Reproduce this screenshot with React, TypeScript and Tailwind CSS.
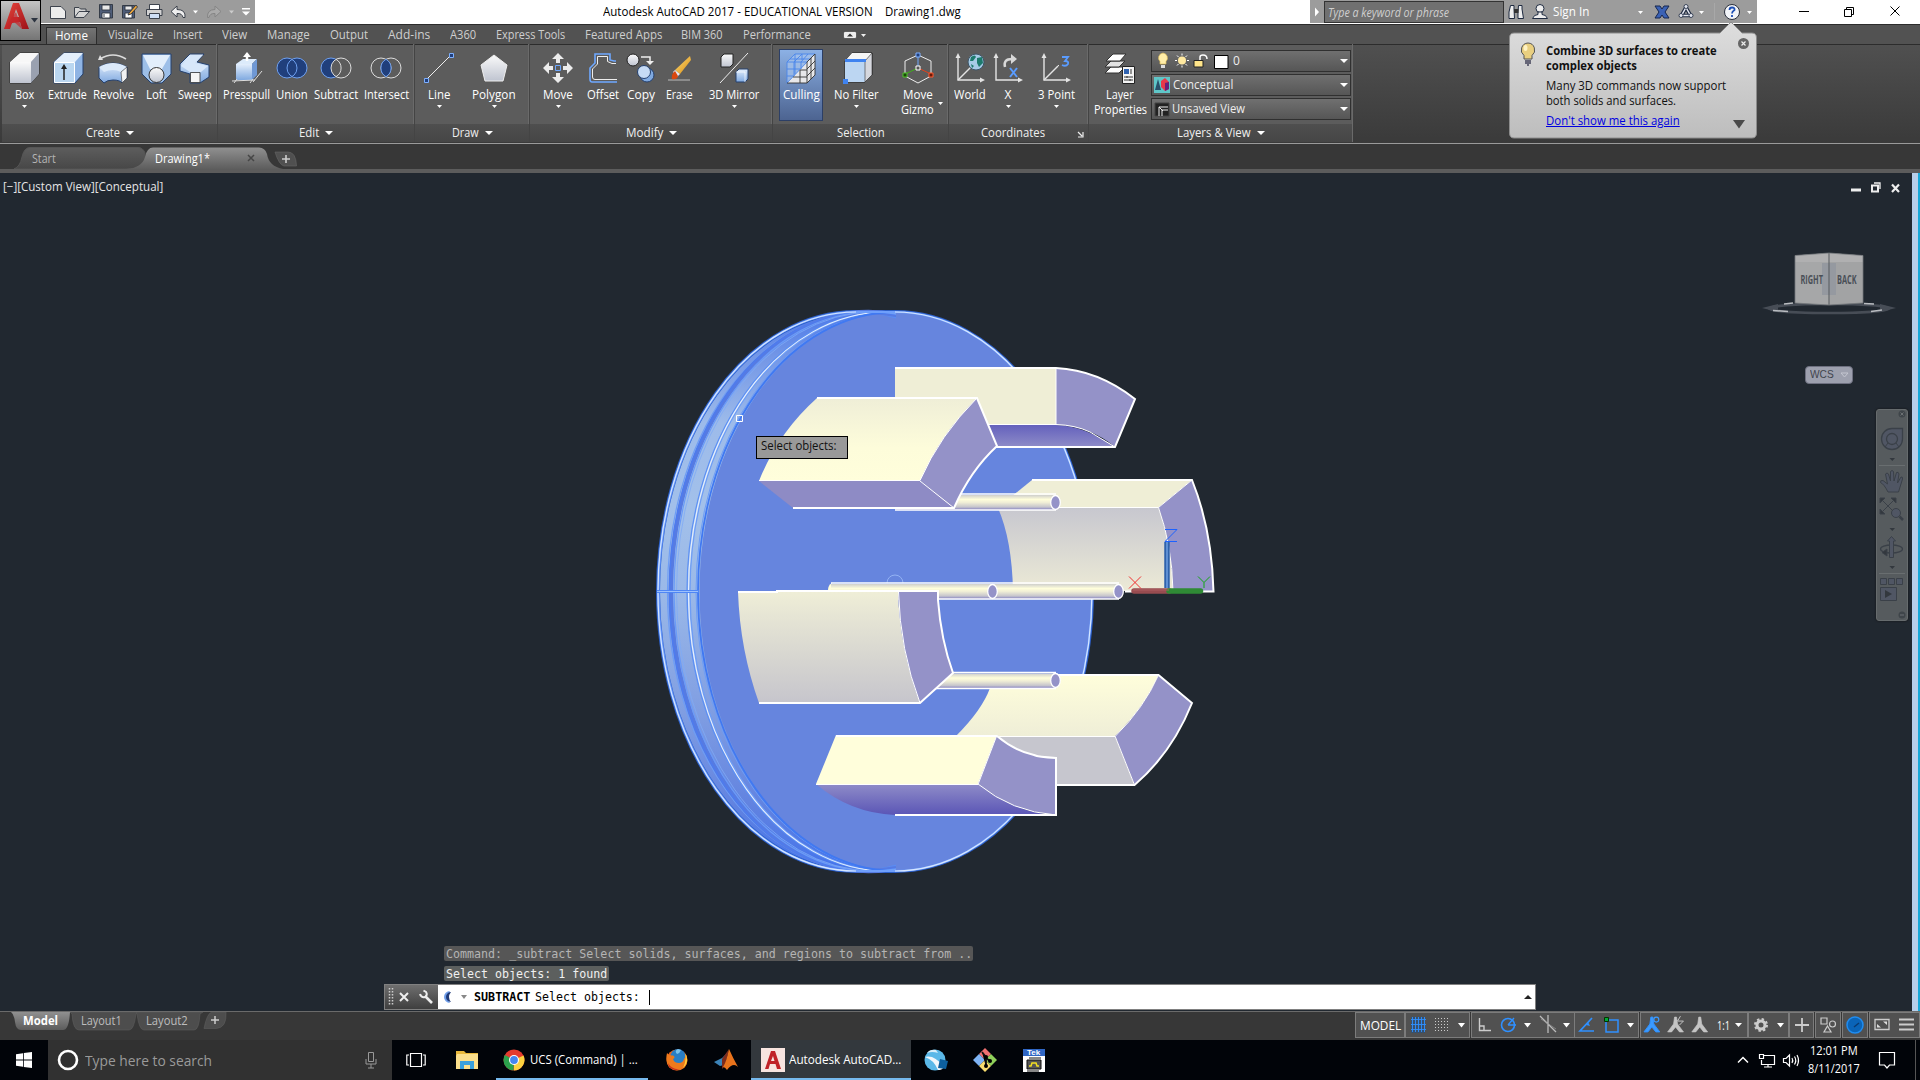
import React, { useLayoutEffect, useRef, useState } from "react";

/* Text condensed or stretched to a given advance width. */
function Fit({ w, className = "", children }: { w: number; className?: string; children: React.ReactNode }) {
  const ref = useRef<HTMLSpanElement>(null);
  const [s, setS] = useState(1);
  useLayoutEffect(() => {
    if (ref.current && ref.current.offsetWidth) setS(w / ref.current.offsetWidth);
  }, [w, children]);
  return (
    <span className={"inline-block whitespace-nowrap shrink-0 " + className} style={{ width: w }}>
      <span ref={ref} className="inline-block origin-left" style={{ transform: `scaleX(${s})` }}>
        {children}
      </span>
    </span>
  );
}

const Down = ({ c = "#fff", w = 6, h = 3 }: { c?: string; w?: number; h?: number }) => (
  <svg width={w} height={h} viewBox="0 0 10 5" preserveAspectRatio="none" className="block shrink-0">
    <path d="M0 0H10L5 5Z" fill={c} />
  </svg>
);

const Cell = ({ className = "", children }: { className?: string; children?: React.ReactNode }) => (
  <div className={"flex shrink-0 items-center justify-center " + className}>{children}</div>
);

/* ------------------------------------------------------------ ribbon icons */
const Svg = ({ children, size = 32 }: { children: React.ReactNode; size?: number }) => (
  <svg width={size} height={size} viewBox="0 0 32 32" fill="none" className="block shrink-0 overflow-visible">
    {children}
  </svg>
);

const Defs = () => (
  <svg width="0" height="0" className="absolute">
    <defs>
      <linearGradient id="gGray" x1="0" y1="0" x2="0" y2="1"><stop offset="0" stopColor="#fafafa" /><stop offset="1" stopColor="#bfc4d0" /></linearGradient>
      <linearGradient id="gBlue" x1="0" y1="0" x2="0" y2="1"><stop offset="0" stopColor="#e4effc" /><stop offset="1" stopColor="#7fa9e0" /></linearGradient>
      <linearGradient id="gRed" x1="0" y1="0" x2="1" y2="1"><stop offset="0" stopColor="#e8453c" /><stop offset="1" stopColor="#9c1218" /></linearGradient>
      <linearGradient id="gGold" x1="0" y1="0" x2="1" y2="1"><stop offset="0" stopColor="#ffe27a" /><stop offset="1" stopColor="#d98910" /></linearGradient>
    </defs>
  </svg>
);

const IBox = () => (
  <Svg>
    <path d="M2 10L12 1H31V22L23 31H2Z" fill="#dcdfe6" stroke="#2a2a2a" />
    <path d="M2 10L12 1H31L23 10Z" fill="#f7f7f7" /><path d="M2 10H23V31H2Z" fill="url(#gGray)" /><path d="M23 10L31 1V22L23 31Z" fill="#9aa1b0" />
  </Svg>
);
const IExtrude = () => (
  <Svg>
    <path d="M2 10L12 1H31V22L23 31H2Z" fill="#8fb4e4" stroke="#24406e" />
    <path d="M2 10L12 1H31L23 10Z" fill="#e4effb" /><path d="M2.500 10.500H22.500V30.500H2.500Z" fill="#bad6f0" stroke="#fff" />
    <path d="M12 28V15" stroke="#222" strokeWidth="1.500" /><path d="M9 17L12 12L15 17Z" fill="#222" />
  </Svg>
);
const IRevolve = () => (
  <Svg>
    <path d="M3 7Q16-1 29 7" stroke="#ddd" strokeWidth="1.500" /><path d="M1 8L3 3L6 8Z" fill="#ddd" />
    <path d="M2 15Q16 7 30 15V26L25 31Q23 28 16 28Q10 28 7 31L2 26Z" fill="url(#gBlue)" stroke="#24406e" />
    <path d="M2 15Q16 7 30 15L24 20Q16 16 7 20Z" fill="#dceafa" /><path d="M24 20L30 15V26L25 31Z" fill="#f2f2f2" stroke="#333" strokeWidth=".6" />
  </Svg>
);
const ILoft = () => (
  <Svg>
    <path d="M2 2H31V22L22 31H11L2 22Z" fill="#9dbfe8" stroke="#24406e" /><path d="M3 3H30L22 17H10Z" fill="#e2eefb" />
    <circle cx="16.500" cy="23" r="7.500" fill="url(#gGray)" stroke="#333" />
  </Svg>
);
const ISweep = () => (
  <Svg>
    <path d="M11 2H25L18 10L30 13V25L21 31H11V22L1 19V12Z" fill="url(#gBlue)" stroke="#24406e" />
    <path d="M11 3H24L16 11L29 14L22 20L11 20L2 14Z" fill="#d7e7fa" /><path d="M11.500 20.500H21V30.500H11.500Z" fill="#f5f5f5" stroke="#333" strokeWidth=".8" />
  </Svg>
);
const IPress = () => (
  <Svg>
    <path d="M6 12L13 7H27L22 12Z" fill="#dcebfb" /><path d="M6 12H22V28H6Z" fill="url(#gBlue)" /><path d="M22 12L27 7V23L22 28Z" fill="#6f98d4" />
    <path d="M2 29L25 28M23 30L32 19M4 31L7 27M20 31L23 27" stroke="#ddd" /><path d="M17 9V4" stroke="#fff" strokeWidth="2.500" /><path d="M13 5L17 0L21 5Z" fill="#fff" />
  </Svg>
);
const IUnion = () => (
  <Svg>
    <circle cx="11" cy="16" r="10" fill="#203f7c" /><circle cx="21" cy="16" r="10" fill="#203f7c" /><circle cx="11" cy="16" r="10" stroke="#6ea0f0" /><circle cx="21" cy="16" r="10" stroke="#6ea0f0" />
  </Svg>
);
const ISubtract = () => (
  <Svg>
    <circle cx="11" cy="16" r="10" fill="#203f7c" stroke="#6ea0f0" /><circle cx="21" cy="16" r="10" fill="#5c5c5c" stroke="#ddd" /><path d="M16 7.300A10 10 0 0 1 16 24.700" stroke="#ddd" />
  </Svg>
);
const IIntersect = () => (
  <Svg>
    <circle cx="11" cy="16" r="10" stroke="#ddd" /><circle cx="21" cy="16" r="10" stroke="#ddd" /><path d="M16 7.300A10 10 0 0 1 16 24.700A10 10 0 0 1 16 7.300Z" fill="#203f7c" stroke="#6ea0f0" />
  </Svg>
);
const ILine = () => (
  <Svg>
    <path d="M4 27L27 4" stroke="#eee" /><path d="M1.500 26.500h4v4h-4zM26.500 1.500h4v4h-4z" fill="#203f7c" stroke="#7fb0ff" />
  </Svg>
);
const IPolygon = () => (
  <Svg><path d="M16 3L29 13L25 29H7L3 13Z" fill="url(#gGray)" stroke="#eee" /></Svg>
);
const IMove = () => (
  <Svg>
    <path d="M16 1L22 7H18V11H14V7H10ZM16 31L22 25H18V21H14V25H10ZM1 16L7 10V14H11V18H7V22ZM31 16L25 10V14H21V18H25V22Z" fill="#ececec" />
    <path d="M13.500 13.500h5v5h-5z" stroke="#6ea8ff" />
  </Svg>
);
const IOffset = () => (
  <Svg>
    <path d="M30 30H5Q3 30 3 27V16L8 11V2H23V8L27 9H29" stroke="#6ea8ff" strokeWidth="1.600" /><path d="M30 27.500H8Q5.500 27.500 5.500 25V17L10.500 12V4.500H20.500V9.500L25 11.500H29" stroke="#eee" />
  </Svg>
);
const ICopy = () => (
  <Svg>
    <circle cx="8" cy="8" r="6" fill="url(#gGray)" stroke="#222" /><path d="M16 5H25V10" stroke="#eee" strokeWidth="1.500" /><path d="M21 9H29L25 13Z" fill="#eee" />
    <circle cx="22" cy="23" r="7" fill="#7fa9e0" stroke="#24406e" /><circle cx="19" cy="20" r="6.500" fill="#c6dbf5" stroke="#24406e" />
  </Svg>
);
const IErase = () => (
  <Svg>
    <path d="M5 28H27" stroke="#bbb" /><path d="M27 4L28 8L17 22L12 18Z" fill="url(#gGold)" /><path d="M12 18L17 22L14 25L10 20Z" fill="#e8e8f0" /><path d="M12 19Q8 22 9 27Q14 28 15 24Z" fill="#d9480f" />
  </Svg>
);
const IMirror = () => (
  <Svg>
    <path d="M2 31L30 1" stroke="#eee" /><path d="M3 5L6 2H15V12L12 15H3Z" fill="url(#gGray)" stroke="#222" /><path d="M18 20L21 17H30V27L27 30H18Z" fill="url(#gBlue)" stroke="#24406e" /><path d="M18 20H27V30" stroke="#fff" strokeWidth=".7" />
  </Svg>
);
const ICulling = () => (
  <Svg>
    <path d="M2 31V10L10 2H30V23L22 31Z" fill="#a9c6ee" opacity=".7" /><path d="M2 31L22 10V31Z" fill="#e8e8ea" /><path d="M22 10L30 2V23L22 31Z" fill="#e8e8ea" />
    <path d="M2 10H22M10 2H30M2 10V31M2 10L10 2M9 10V24M9 10L17 2M16 10V17M16 10L23 2M2 17H15M2 24H8M2 31L22 10M10 2V22M5 7H26M17 2V8" stroke="#4a86ea" strokeWidth=".9" />
    <path d="M22 10L30 2V23L22 31V10M22 17L30 9M22 24L30 16M26 6V27M2 31H22M8 25H22M15 18H22M15 18V31" stroke="#333" strokeWidth=".9" />
  </Svg>
);
const INoFilter = () => (
  <Svg>
    <path d="M4 9L11 1H31V23L24 30H4Z" fill="#dedfe2" stroke="#222" /><path d="M4 9L11 1H31L24 9Z" fill="#f5f5f5" /><path d="M4 9H24V30H4Z" fill="#bcd6f2" /><path d="M24 9L31 1V23L24 30Z" fill="#d6d8de" stroke="#333" strokeWidth=".6" />
    <path d="M4 7H25V10H4ZM2 27H7V32H2Z" fill="#3f83f0" />
  </Svg>
);
const IGizmo = () => (
  <Svg>
    <path d="M16 3L29 9V24L16 31L3 24V9Z" stroke="#eee" /><path d="M16 16V3" stroke="#6ea8ff" /><path d="M16 16L3 22" stroke="#3fae1a" /><path d="M16 16L29 22" stroke="#e0401a" />
    <path d="M14 1h4v4h-4z" fill="#203f7c" stroke="#7fb0ff" /><path d="M1 21h4v4h-4z" fill="#1a4a08" stroke="#4fc22a" /><path d="M27 21h4v4h-4z" fill="#6a1a08" stroke="#ff5a30" /><path d="M14 14h4v4h-4z" fill="#555" stroke="#fff" />
  </Svg>
);
const Axes = ({ diag = true }: { diag?: boolean }) => (
  <>
    <path d="M4 4V28H28" stroke="#e4e4e4" strokeWidth="1.400" /><path d="M1.500 6L4 1L6.500 6ZM26 25.500L31 28L26 30.500Z" fill="#e4e4e4" />
    {diag && <path d="M4 28L18 14" stroke="#e4e4e4" strokeWidth="1.400" />}
  </>
);
const IWorld = () => (
  <Svg>
    <Axes /><circle cx="22" cy="10" r="8" fill="#a7cbe6" stroke="#3c5568" /><path d="M17 5Q21 2 22 5L19 9L16 9ZM23 6L28 5L29 11L25 15L23 11ZM17 12L20 14L18 16Z" fill="#1d7a6c" />
  </Svg>
);
const IX = () => (
  <Svg>
    <Axes diag={false} /><path d="M13 15Q11 7 20 7" stroke="#d8d8d8" strokeWidth="2.500" /><path d="M19 2L25 7L19 12Z" fill="#d8d8d8" /><path d="M18 16L25 25M25 16L18 25" stroke="#5a9cff" strokeWidth="2" />
  </Svg>
);
const I3P = () => (
  <Svg>
    <Axes /><path d="M15 17L19 13" stroke="#e4e4e4" /><path d="M22 5H28L25 9Q29 9 28 12Q26 15 22 13" stroke="#5a9cff" strokeWidth="1.800" />
  </Svg>
);
const ILayers = () => (
  <Svg>
    <path d="M7 15H21L15 21H1Z" fill="#fff" stroke="#333" /><path d="M7 9H21L15 15H1Z" fill="#e4e4e4" stroke="#333" /><path d="M9 2H22L16 9H2Z" fill="#fff" stroke="#333" />
    <path d="M18.500 14.500H30.500V31.500H18.500Z" fill="#f4f4f4" stroke="#222" /><path d="M20 17H25V22H20Z" fill="#2f62b0" /><path d="M27 17V22M20 25H29M20 28H29M23 24V26M26 27V29" stroke="#333" />
  </Svg>
);

type Btn = { cell: string; label: string; w: number; icon: React.ReactNode; arrow?: boolean; second?: string; w2?: number; side?: boolean; on?: boolean };
type PanelT = { width: string; title: string; tw: number; menu?: boolean; launcher?: boolean; pl?: string; items: Btn[] };

const panels: PanelT[] = [
  { width: "w-[216px]", title: "Create", tw: 34, menu: true, items: [
    { cell: "w-[44px]", label: "Box", w: 19, icon: <IBox />, arrow: true }, { cell: "w-[43px]", label: "Extrude", w: 39, icon: <IExtrude /> },
    { cell: "w-[48px]", label: "Revolve", w: 41, icon: <IRevolve /> }, { cell: "w-[38px]", label: "Loft", w: 21, icon: <ILoft /> }, { cell: "w-[40px]", label: "Sweep", w: 34, icon: <ISweep /> }] },
  { width: "w-[197px]", title: "Edit", tw: 20, menu: true, pl: "pl-[2px]", items: [
    { cell: "w-[52px]", label: "Presspull", w: 47, icon: <IPress /> }, { cell: "w-[39px]", label: "Union", w: 32, icon: <IUnion /> },
    { cell: "w-[49px]", label: "Subtract", w: 44, icon: <ISubtract /> }, { cell: "w-[52px]", label: "Intersect", w: 45, icon: <IIntersect /> }] },
  { width: "w-[115px]", title: "Draw", tw: 27, menu: true, items: [
    { cell: "w-[48px]", label: "Line", w: 22, icon: <ILine />, arrow: true }, { cell: "w-[62px]", label: "Polygon", w: 44, icon: <IPolygon />, arrow: true }] },
  { width: "w-[243px]", title: "Modify", tw: 37, menu: true, items: [
    { cell: "w-[56px]", label: "Move", w: 30, icon: <IMove />, arrow: true }, { cell: "w-[34px]", label: "Offset", w: 32, icon: <IOffset /> },
    { cell: "w-[42px]", label: "Copy", w: 28, icon: <ICopy /> }, { cell: "w-[34px]", label: "Erase", w: 27, icon: <IErase /> }, { cell: "w-[76px]", label: "3D Mirror", w: 50, icon: <IMirror />, arrow: true }] },
  { width: "w-[176px]", title: "Selection", tw: 48, pl: "pl-[6px]", items: [
    { cell: "w-[44px]", label: "Culling", w: 37, icon: <ICulling />, on: true }, { cell: "w-[67px]", label: "No Filter", w: 45, icon: <INoFilter />, arrow: true },
    { cell: "w-[55px]", label: "Move", w: 30, second: "Gizmo", w2: 33, side: true, icon: <IGizmo /> }] },
  { width: "w-[140px]", title: "Coordinates", tw: 64, launcher: true, items: [
    { cell: "w-[42px]", label: "World", w: 32, icon: <IWorld /> }, { cell: "w-[34px]", label: "X", w: 7, icon: <IX />, arrow: true }, { cell: "w-[62px]", label: "3 Point", w: 37, icon: <I3P />, arrow: true }] },
];

const PanelTitle = ({ p }: { p: { title: string; tw: number; menu?: boolean; launcher?: boolean } }) => (
  <div className={"relative flex h-[18px] shrink-0 items-center justify-center gap-[6px] bg-gradient-to-b from-[#4f4f4f] to-[#464646] text-[12px] leading-[18px] text-[#f0f0f0] " + (p.launcher ? "pr-[12px]" : "")}>
    <Fit w={p.tw}>{p.title}</Fit>
    {p.menu && <Down w={8} h={4} />}
    {p.launcher && <svg width="7" height="7" viewBox="0 0 7 7" className="absolute right-[4px] top-[7px]"><path d="M1 1L5 5M6 1V6H1" stroke="#eee" strokeWidth="1.200" fill="none" /></svg>}
  </div>
);

const Ribbon = () => (
  <div className="flex h-[100px] shrink-0 border-b border-b-[#9a9a9a] bg-gradient-to-b from-[#505050] to-[#3a3a3a] pl-[2px] shadow-[inset_0_1px_0_#2c2c2c]">
    {panels.map((p) => (
      <div key={p.title} className={"flex h-[98px] flex-col border-r border-[#444] bg-[#5c5c5c] pt-px shadow-[inset_-1px_0_0_#6a6a6a,inset_0_1px_0_#2c2c2c] " + p.width}>
        <div className={"flex h-[79px] pt-[4px] " + (p.pl ?? "")}>
          {p.items.map((b) => (
            <div key={b.label} className={"relative flex h-[72px] shrink-0 flex-col items-center pt-[3px] text-[12px] leading-[15px] text-white " + b.cell + (b.on ? " bg-gradient-to-b from-[#8db2e6] to-[#4c6390] outline outline-1 -outline-offset-1 outline-[#2c3f66]" : "")}>
              {b.icon}
              <Fit w={b.w} className="mt-[3px]">{b.label}</Fit>
              {b.second && <Fit w={b.w2 ?? 30}>{b.second}</Fit>}
              {b.arrow && <div className="mt-[3px]"><Down w={5} h={3} /></div>}
              {b.side && <div className="absolute right-[2px] top-[53px]"><Down w={5} h={3} /></div>}
            </div>
          ))}
        </div>
        <PanelTitle p={p} />
      </div>
    ))}
    <div className="flex h-[98px] w-[264px] flex-col border-r border-[#6a6a6a] bg-[#5c5c5c] pt-px shadow-[inset_0_1px_0_#2c2c2c]">
      <div className="flex h-[79px] pt-[4px]">
        <div className="flex w-[62px] flex-col items-center pt-[3px] text-[12px] leading-[15px] text-white">
          <ILayers />
          <Fit w={28} className="mt-[3px]">Layer</Fit>
          <Fit w={53}>Properties</Fit>
        </div>
        <div className="flex w-[200px] flex-col gap-[2px] pt-[1px] text-[12px] leading-[20px] text-[#eee]">
          {[0, 1, 2].map((r) => (
            <div key={r} className="flex h-[22px] items-center border border-[#303030] bg-gradient-to-b from-[#707070] to-[#565656] pr-[2px]">
              {r === 0 && (
                <>
                  <svg width="84" height="18" viewBox="0 0 84 18" fill="none" className="shrink-0">
                    <path d="M11 1a5 5 0 0 1 3 8.500V12H8V9.500A5 5 0 0 1 11 1Z" fill="#ffedA8" stroke="#e0c060" strokeWidth=".7" /><path d="M9 13H13V16H9Z" fill="#ddd" />
                    <circle cx="30" cy="8.500" r="4" fill="#ffe9a0" /><path d="M30 1.500V3.500M30 13.500V15.500M23 8.500H25M35 8.500H37M25 3.500L26.500 5M33.500 12L35 13.500M35 3.500L33.500 5M25 13.500L26.500 12" stroke="#fff" />
                    <path d="M42 8.500H51V15H42Z" fill="#ffe58a" stroke="#222" /><path d="M48 8V5Q48 3 51 3Q55 3 55 7" stroke="#fff" strokeWidth="1.500" />
                    <path d="M62.500 3.500H76V16.500H62.500Z" fill="#fff" stroke="#000" />
                  </svg>
                  <span className="-ml-[3px]">0</span>
                </>
              )}
              {r === 1 && (
                <>
                  <svg width="20" height="18" viewBox="0 0 20 18" className="shrink-0"><path d="M2 1H18V17H2Z" fill="#5fc6c8" /><path d="M3 14L6 3L9 14Z" fill="#28506a" /><path d="M9 5L13 2L17 6V13L13 15L9 11Z" fill="#e8384a" /><path d="M13 7L17 6V13L13 15Z" fill="#6a1f7a" /></svg>
                  <Fit w={60} className="ml-px">Conceptual</Fit>
                </>
              )}
              {r === 2 && (
                <>
                  <svg width="20" height="18" viewBox="0 0 20 18" fill="none" className="shrink-0"><path d="M3 3H17V16H3Z" fill="#222" stroke="#444" /><path d="M7 16V7H16M10 16V10H16M7 7L11 11" stroke="#eee" /></svg>
                  <Fit w={73}>Unsaved View</Fit>
                </>
              )}
              <div className="flex-1" />
              <Down w={8} h={4} />
            </div>
          ))}
        </div>
      </div>
      <PanelTitle p={{ title: "Layers & View", tw: 74, menu: true }} />
    </div>
  </div>
);

/* --------------------------------------------------------------- title bar */
const TitleBar = () => (
  <div className="flex h-[24px] shrink-0 bg-white text-[12px]">
    <div className="flex h-[23px] w-[255px] shrink-0 bg-[#9c9c9c] pl-[46px]">
      <svg width="208" height="24" viewBox="46 0 208 24" fill="none">
        <g stroke="#2e3440" strokeWidth=".9">
          <path d="M50.500 6.500H61L65.500 11V18.500H50.500Z" fill="#ececec" /><path d="M74.500 17.500V7.500H79L80.500 9H86V11.500H89.500L84 17.500Z" fill="#d6d6d6" /><path d="M74.500 17.500L79 11.500H89.500" />
          <path d="M99.500 4.500H112.500V18H99.500Z" fill="#4f5d78" /><path d="M102 5H110V10H102Z" fill="#e9e9e9" /><path d="M102 13H110V18H102Z" fill="#fff" /><path d="M104 14V17" />
          <path d="M122.500 5.500H134.500V18H122.500Z" fill="#4f5d78" /><path d="M125 6H132V10H125Z" fill="#e9e9e9" /><path d="M125 13H132V18H125Z" fill="#fff" /><path d="M136 5L129 13L128 15L131 14L137.500 7Z" fill="#f3a93a" />
          <path d="M149.500 4.500H159.500V10H149.500Z" fill="#fff" /><path d="M146.500 9.500H162V15.500H146.500Z" fill="#d3d3d3" /><path d="M149.500 13.500H159.500V18.500H149.500Z" fill="#cfe0f7" />
          <path d="M177 6L171 11.500L177 17V13.500Q182 13 183 17.500H185Q186 9.500 177 9.500Z" fill="#eee" />
        </g>
        <path d="M215 6L221 11.500L215 17V13.500Q210 13 209 17.500H207.500Q207 9.500 215 9.500Z" fill="#aaa" stroke="#858585" />
        <path d="M193 10.500H198L195.500 13.500ZM242 8H250V9.500H242ZM242 11.500H250L246 15.500Z" fill="#fff" /><path d="M229 10.500H234L231.500 13.500Z" fill="#ccc" />
      </svg>
    </div>
    <div className="flex flex-1 items-center justify-center gap-[12px] pr-[1px] text-[12px] leading-[24px] text-black">
      <Fit w={270}>Autodesk AutoCAD 2017 - EDUCATIONAL VERSION</Fit>
      <Fit w={76}>Drawing1.dwg</Fit>
    </div>
    <div className="flex h-[23px] w-[447px] shrink-0 items-center bg-[#9c9c9c]">
      <svg width="14" height="23" viewBox="0 0 14 23"><path d="M5 7.500L9 12L5 16.500Z" fill="#fff" /></svg>
      <div className="h-[22px] w-[180px] border border-[#333] bg-[#707070] pl-[3px] text-[12px] italic leading-[21px] text-[#cfcfcf]"><Fit w={121}>Type a keyword or phrase</Fit></div>
      <svg width="49" height="23" viewBox="1504 0 49 23" fill="none">
        <path d="M1510.500 5.500H1514V9L1514.500 18.500H1509V12ZM1518.500 5.500H1522V9L1523.500 18.500H1518V12Z" fill="#eee" stroke="#1e2a40" /><path d="M1514 9H1518.500V13H1514Z" fill="#333" />
        <circle cx="1540" cy="8.500" r="4" fill="#eee" stroke="#1e2a40" /><path d="M1532.500 18.500Q1534 14.500 1538 14.500V12H1542V14.500Q1546 14.500 1547.500 18.500Z" fill="#eee" stroke="#1e2a40" />
      </svg>
      <Fit w={36} className="text-[12px] leading-[23px] text-white">Sign In</Fit>
      <svg width="168" height="23" viewBox="1589 0 168 23" fill="none">
        <path d="M1638 11H1643L1640.500 14ZM1699 11H1704L1701.500 14ZM1747 11H1752L1749.500 14Z" fill="#fff" />
        <path d="M1655 6H1660L1662 9L1664 6H1669L1665 12L1669 18H1664L1662 15L1660 18H1655L1659 12Z" fill="#3b62b5" stroke="#16264e" />
        <path d="M1686 7.500L1690.500 15.500H1681.500Z" stroke="#1e2a40" strokeWidth="3.600" strokeLinejoin="round" /><path d="M1686 7.500L1690.500 15.500H1681.500Z" stroke="#e6e9f2" strokeWidth="1.500" />
        <circle cx="1686" cy="6.500" r="2" fill="#e6e9f2" stroke="#1e2a40" strokeWidth=".8" /><circle cx="1681" cy="15.500" r="2" fill="#e6e9f2" stroke="#1e2a40" strokeWidth=".8" /><circle cx="1691" cy="15.500" r="2" fill="#e6e9f2" stroke="#1e2a40" strokeWidth=".8" />
        <circle cx="1732" cy="12" r="7.500" fill="#f2f4f8" stroke="#2a2f3c" /><path d="M1714.500 3V20" stroke="#a8a8a8" />
        <path d="M1729.500 10Q1729.500 7.500 1732 7.500Q1735 7.500 1734.500 10Q1732 11.500 1732 13.500M1732 15V17" stroke="#1d4fb5" strokeWidth="1.800" />
      </svg>
    </div>
    <svg width="163" height="23" viewBox="1757 0 163 23" fill="none" className="shrink-0">
      <path d="M1799 11.500H1809M1844.500 9.500H1851.500V16.500H1844.500ZM1846.500 9V7.500H1853.500V14.500H1852M1890.500 6.500L1899.500 15.500M1899.500 6.500L1890.500 15.500" stroke="#000" />
    </svg>
  </div>
);

const AppButton = () => (
  <div className="absolute left-0 top-0 h-[41px] w-[41px] border border-black bg-gradient-to-b from-[#c4c4c4] to-[#757575]">
    <svg width="39" height="39" viewBox="1 1 39 39" className="block">
      <path d="M4 29L13 3H19L29 29H22L20 22L12 23L10 29Z" fill="url(#gRed)" /><path d="M13.500 17L16 9L19 17Z" fill="#b9b0b0" /><path d="M4 29L16 12L22 29L14 22Z" fill="#c9252b" opacity=".7" />
      <path d="M31 18H38L34.500 22.500Z" fill="#2c3440" />
    </svg>
  </div>
);

const tabs: [string, number, string][] = [
  ["Visualize", 45, "ml-[11px]"], ["Insert", 29, "ml-[20px]"], ["View", 25, "ml-[20px]"], ["Manage", 43, "ml-[20px]"], ["Output", 38, "ml-[20px]"], ["Add-ins", 42, "ml-[20px]"],
  ["A360", 26, "ml-[20px]"], ["Express Tools", 69, "ml-[20px]"], ["Featured Apps", 77, "ml-[20px]"], ["BIM 360", 42, "ml-[19px]"], ["Performance", 68, "ml-[20px]"],
];
const RibbonTabs = () => (
  <div className="flex h-[20px] shrink-0 border-t border-[#2c2c2c] bg-[#525252] pl-[46px] text-[12px] leading-[20px] text-[#cfcfcf]">
    <div className="mt-[2px] h-[18px] w-[51px] border border-b-0 border-[#2c2c2c] bg-gradient-to-b from-[#747474] to-[#5c5c5c] pl-[8px] leading-[15px] text-white"><Fit w={33}>Home</Fit></div>
    {tabs.map(([t, w, m]) => <Fit key={t} w={w} className={m}>{t}</Fit>)}
    <svg width="40" height="19" viewBox="832 25 40 19" className="ml-[21px]">
      <rect x="843.500" y="31.500" width="13" height="7" rx="1.500" fill="#eee" stroke="#333" strokeWidth=".6" /><path d="M847 36.500H853L850 33.500Z" fill="#333" /><path d="M861 34H866L863.500 37Z" fill="#eee" />
    </svg>
  </div>
);

const FileTabs = () => (
  <div className="relative flex h-[29px] shrink-0 items-start border-b-4 border-[#5c5c5c] bg-[#373737] text-[12px] leading-[26px]">
    <svg width="320" height="25" viewBox="0 144 320 25" className="absolute left-0 top-0">
      <defs>
        <linearGradient id="tb1" x1="0" y1="0" x2="0" y2="1"><stop offset="0" stopColor="#5d5d5d" /><stop offset="1" stopColor="#474747" /></linearGradient>
        <linearGradient id="tb2" x1="0" y1="0" x2="0" y2="1"><stop offset="0" stopColor="#909090" /><stop offset="1" stopColor="#5c5c5c" /></linearGradient>
      </defs>
      <path d="M14 169Q20 167 22 157Q24 147.500 30 147.500H138Q143 147.500 145 153V169Z" fill="url(#tb1)" stroke="#555" />
      <path d="M126 169Q142 168 145 157Q147 147.500 153 147.500H259Q265 147.500 267 154Q269 168 287 169.500Z" fill="url(#tb2)" />
      <path d="M275 152H288Q296 152 296.500 166H284Q279 165 275 152Z" fill="#505050" stroke="#666" strokeWidth=".6" />
      <path d="M286 155V163M282 159H290" stroke="#ccc" strokeWidth="1.600" /><path d="M248 155L254 161M254 155L248 161" stroke="#464646" strokeWidth="1.500" />
    </svg>
    <Fit w={24} className="relative ml-[32px] pt-[2px] text-[#b4b4b4]">Start</Fit>
    <Fit w={55} className="relative ml-[99px] pt-[2px] text-white">Drawing1*</Fit>
  </div>
);

/* ------------------------------------------------------------------ model */
const Rod = ({ x1, x2, y }: { x1: number; x2: number; y: number }) => (
  <>
    <rect x={x1} y={y - 7} width={x2 - x1} height="15" fill="url(#rod)" />
    <path d={`M${x1} ${y - 8}H${x2}M${x1} ${y + 8}H${x2}`} stroke="#fff" strokeWidth="1.600" />
  </>
);
const RodEnd = ({ x, y }: { x: number; y: number }) => <ellipse cx={x} cy={y} rx="4.800" ry="7" fill="#9492c8" stroke="#fff" strokeWidth="1.300" />;

/* Edges on the disc rim: centre x, colour, stroke width. */
const shells: [number, string, number][] = [
  [856.500, "#5a8cf4", 1.500], [865, "#6d9df6", 1.200], [868.300, "#567be2", 4.500], [867, "#4d7cf0", 1.200], [871.500, "#6a9bf8", 1.200], [874, "#7fabf6", 0.800],
  [884.500, "#5c90f4", 1.200], [887.500, "#6d9df6", 1.200], [886, "#e6f0ff", 1.100], [893.500, "#6d9df6", 1], [895.500, "#4079f2", 1.800],
];

const Model = () => (
  <svg width="1912" height="838" viewBox="0 173 1912 838" fill="none" className="absolute left-0 top-0">
    <defs>
      <linearGradient id="shell" x1="0" y1="311" x2="0" y2="871" gradientUnits="userSpaceOnUse"><stop offset="0" stopColor="#4a78ea" /><stop offset=".08" stopColor="#7396e6" /><stop offset=".2" stopColor="#9dbbea" /><stop offset=".35" stopColor="#a2c0ea" /><stop offset=".5" stopColor="#9bb9e8" /><stop offset=".72" stopColor="#7f9de2" /><stop offset=".88" stopColor="#6283e0" /><stop offset="1" stopColor="#4373ec" /></linearGradient>
      <linearGradient id="rod" x1="0" y1="0" x2="0" y2="1"><stop offset="0" stopColor="#cfcfcc" /><stop offset=".3" stopColor="#fffedb" /><stop offset=".5" stopColor="#f0eed6" /><stop offset=".8" stopColor="#c6c5cc" /><stop offset="1" stopColor="#7c79c2" /></linearGradient>
      <linearGradient id="under" x1="0" y1="0" x2="0" y2="1"><stop offset="0" stopColor="#6461bd" /><stop offset="1" stopColor="#8e8cc8" /></linearGradient>
      <linearGradient id="under2" x1="0" y1="0" x2="0" y2="1"><stop offset="0" stopColor="#8f8cc8" /><stop offset="1" stopColor="#5a55b6" /></linearGradient>
      <linearGradient id="cream" x1="0" y1="0" x2="0" y2="1"><stop offset="0" stopColor="#efeed7" /><stop offset=".6" stopColor="#fdfcda" /><stop offset="1" stopColor="#fffedb" /></linearGradient>
      <linearGradient id="cream2" x1="0" y1="0" x2="0" y2="1"><stop offset="0" stopColor="#fffedb" /><stop offset="1" stopColor="#efeed7" /></linearGradient>
      <linearGradient id="grayUp" x1="0" y1="0" x2="0" y2="1"><stop offset="0" stopColor="#c7c7cf" /><stop offset="1" stopColor="#ecead6" /></linearGradient>
      <linearGradient id="grayDn" x1="0" y1="0" x2="0" y2="1"><stop offset="0" stopColor="#efeed7" /><stop offset="1" stopColor="#c6c5cc" /></linearGradient>
      <clipPath id="leftHalf"><rect x="640" y="300" width="256" height="580" /></clipPath>
    </defs>
    {/* disc */}
    <path d="M856 312H895A197 279.500 0 0 1 895 871H856A198 279.500 0 0 1 856 312Z" fill="url(#shell)" stroke="#2c5fc8" strokeWidth="4" />
    <ellipse cx="896" cy="591.500" rx="196.500" ry="279" fill="#6685de" />
    <g clipPath="url(#leftHalf)">
      {shells.map(([cx, c, sw]) => <ellipse key={cx} cx={cx} cy="591.500" rx="197.500" ry={279.500} stroke={c} strokeWidth={sw} />)}
    </g>
    <path d="M856 312A198 279.500 0 0 0 856 871H895A197 279.500 0 0 0 895 312Z" stroke="#6f9ffb" strokeWidth="2" />
    <path d="M856 312A198 279.500 0 0 0 856 871M895 312A197 279.500 0 0 1 895 871" stroke="#d6e6ff" strokeWidth="1.200" />
    <path d="M657 591.500H699" stroke="#4f86f5" strokeWidth="3" /><path d="M657 591.500H698" stroke="#9cc0fb" />
    <path d="M887 583A8 8 0 0 1 903 583" stroke="#94b3f4" />
    {/* upper rear block */}
    <path d="M895 368H1056V425H895Z" fill="#efeed6" />
    <path d="M960 425H1056Q1085 426 1115 447H960Z" fill="url(#under)" />
    <path d="M1056 368Q1098 370 1135 399L1115 447Q1090 426 1056 425Z" fill="#9492c8" />
    <path d="M1056 368V425M985 424.500H1056Q1075 425 1090 432L1115 447" stroke="#fff" />
    <path d="M895 368H1056Q1098 370 1135 399L1115 447H990" stroke="#fff" strokeWidth="2" />
    {/* right block */}
    <path d="M1032 480H1192L1158.500 507.500H998Z" fill="#efeed6" />
    <path d="M998 507.500H1158.500Q1172 545 1173 591H1013Q1012 540 998 508Z" fill="url(#grayUp)" />
    <path d="M1192 480Q1212 530 1213.500 591H1173Q1172 545 1158.500 507.500Z" fill="#9492c8" />
    <path d="M1192 480L1158.500 507.500H1056M1158.500 507.500Q1172 545 1173 591" stroke="#fff" />
    <path d="M1032 480H1192Q1212 530 1213.500 591.500H1125" stroke="#fff" strokeWidth="2" />
    {/* lower right block */}
    <path d="M1000 675H1158.500Q1144 708 1115 736H956Q982 710 990 688Z" fill="url(#cream2)" />
    <path d="M990 736H1115L1134.500 785H1050Z" fill="#c6c6ce" />
    <path d="M1158.500 675L1192 703Q1172 753 1134.500 785L1115 736Q1144 708 1158.500 675Z" fill="#9492c8" />
    <path d="M1158.500 675Q1144 708 1115 736.500H997M1115 736L1134.500 785" stroke="#fff" />
    <path d="M1056 675H1158.500L1192 703Q1172 753 1134.500 785H1056" stroke="#fff" strokeWidth="2" />
    {/* rods */}
    <Rod x1={895} x2={1056} y={502} /><RodEnd x={1055.500} y={502.500} />
    <path d="M828 590Q828 585 832 583V599H828Z" fill="#fffedb" />
    <Rod x1={831} x2={1119} y={591} /><RodEnd x={992.500} y={591.500} /><RodEnd x={1118.500} y={591.500} />
    <Rod x1={925} x2={1056} y={680.500} /><RodEnd x={1055.500} y={680.500} />
    {/* upper left block */}
    <path d="M817 398H977Q940 435 920 481H759Q778 433 817 398Z" fill="url(#cream)" />
    <path d="M759 481H920L954 508H793Z" fill="#8e8bc5" />
    <path d="M977 398L997 446Q970 471 954 508L920 481Q940 435 977 398Z" fill="#9492c8" />
    <path d="M977 398Q940 435 920 480.500H759M920 481L954 508" stroke="#fff" />
    <path d="M817 398H977L997 446Q970 471 954 508H793" stroke="#fff" strokeWidth="2" />
    {/* left block */}
    <path d="M738 592H898Q900 650 920 703H759Q740 650 738 592Z" fill="url(#grayDn)" />
    <path d="M898 592H938Q940 638 953 673L920 703Q900 650 898 592Z" fill="#9492c8" />
    <path d="M898.500 592Q900 650 920 703" stroke="#fff" />
    <path d="M738 592H777V591H938V600Q941 640 953 673L920 703H759" stroke="#fff" strokeWidth="2" />
    {/* lower front block */}
    <path d="M816 784H978Q1015 813 1056 815H895Q850 813 816 784Z" fill="url(#under2)" />
    <path d="M836 735H997L978 784H816Z" fill="#fffedb" />
    <path d="M997 735Q1022 757 1056 758V815Q1012 812 978 784Z" fill="#9492c8" />
    <path d="M997 735L978 784.500H816M978 784Q1012 812 1056 815" stroke="#fff" />
    <path d="M836 736H997Q1015 751 1034 755Q1038 757 1056 758V815H895" stroke="#fff" strokeWidth="2" />
    {/* coordinate axes */}
    <path d="M1134 591H1169" stroke="#984c50" strokeWidth="5.500" strokeLinecap="round" /><path d="M1169 591H1200.500" stroke="#2f8a35" strokeWidth="5.500" strokeLinecap="round" />
    <path d="M1133 590H1169" stroke="#b56468" strokeWidth=".8" /><path d="M1167 542V588" stroke="#2f62ac" strokeWidth="5.500" /><path d="M1167 542V588" stroke="#6f9fe0" strokeWidth="1.500" />
    <path d="M1129 576.500L1141 588.500M1141 576.500L1129 588.500" stroke="#f03030" /><path d="M1165 529.500H1177L1165 541.500H1177" stroke="#1c62ff" /><path d="M1198 576.500L1204 582.500L1210 576.500M1204 582.500V588" stroke="#12a812" />
    <path d="M736.500 415.500h6v6h-6z" stroke="#fff" />
  </svg>
);

const ViewCube = () => (
  <svg width="140" height="70" viewBox="1760 245 140 70" fill="none" className="absolute left-[1760px] top-[72px]">
    <ellipse cx="1829" cy="308.500" rx="60" ry="4.500" stroke="#474d56" strokeWidth="2.500" /><path d="M1762 308L1778 304V312ZM1896 308L1880 304V312Z" fill="#474d56" />
    <path d="M1773 310.500L1788 311.500M1871 311.500L1882 310M1784 304L1793 303M1864 303.500L1874 304" stroke="#b9bcc0" strokeWidth="1.500" />
    <path d="M1795 255.500L1829 253V305L1795 303Z" fill="#a6a7a8" /><path d="M1829 253L1863 255.500V303L1829 305Z" fill="#a2a3a4" />
    <path d="M1795 255.500L1829 253L1863 255.500V262H1795Z" fill="#b0b0b1" /><path d="M1822 263H1836V295H1822Z" fill="#9599a0" />
    <path d="M1829 253V305" stroke="#55585c" /><path d="M1795 255.500L1829 253L1863 255.500V303L1829 305L1795 303Z" stroke="#74777b" strokeWidth=".8" />
    <g fontFamily="Open Sans, sans-serif" fontWeight="700" fontSize="13" fill="#4a4f57">
      <text x="1800.500" y="284" textLength="22.500" lengthAdjust="spacingAndGlyphs">RIGHT</text><text x="1837" y="284" textLength="19.500" lengthAdjust="spacingAndGlyphs">BACK</text>
    </g>
  </svg>
);

const NavBar = () => (
  <div className="absolute left-[1876px] top-[236px] h-[212px] w-[32px] rounded-[3px] border border-[#666b6d] bg-[#565b5e] shadow-[0_0_2px_#111]">
    <svg width="30" height="210" viewBox="1877 410 30 210" fill="none" stroke="#3a4048" className="block">
      <circle cx="1902" cy="414" r="3.500" fill="#3f454a" stroke="none" /><path d="M1900.500 412.500l3 3m0-3l-3 3" stroke="#6c7174" />
      <path d="M1892 428.500H1902.500V439A10.500 10.500 0 1 1 1892 428.500Z" fill="#505664" strokeWidth="1.300" /><circle cx="1892" cy="439" r="5.500" strokeWidth="1.300" /><path d="M1888 443L1885 447M1896 443L1899 447" />
      <path d="M1889.500 458H1895L1892.300 461ZM1889.500 528H1895L1892.300 531ZM1889.500 566H1895L1892.300 569Z" fill="#33383e" stroke="none" />
      <path d="M1879 465.500H1905M1879 573.500H1905" stroke="#696e70" />
      <path d="M1888 492Q1884 484 1880.500 482.500Q1880 480 1883 480.500L1887.500 484L1885.500 474Q1887 472 1888.500 474L1890.500 481L1890.500 471.500Q1892 469.500 1893.500 471.500L1894 481L1896.500 472.500Q1898.500 471.500 1899 474L1897.500 483L1901 477Q1903 476.500 1902.500 479L1898.500 492Z" fill="#505664" />
      <path d="M1881 499L1895 513M1895 499L1881 513" /><path d="M1880 498H1885L1880 503ZM1896 498H1891L1896 503ZM1880 514V509L1885 514Z" fill="#33383e" /><circle cx="1896" cy="513" r="4.500" fill="#505664" /><path d="M1899.500 516.500L1903 520" strokeWidth="2.500" />
      <ellipse cx="1891.500" cy="549" rx="11" ry="4" strokeWidth="1.300" /><path d="M1889.500 557.500V541H1887.500L1891.500 536.500L1895.500 541H1893.500V557.500Z" fill="#505664" /><path d="M1882 552.500L1887 549V556Z" fill="#33383e" />
      <path d="M1880.500 578.500h6v6h-6zM1888.500 578.500h6v6h-6zM1896.500 578.500h6v6h-6zM1880.500 587.500h16v13h-16z" fill="#505664" /><path d="M1885 590L1892 594L1885 598Z" fill="#33383e" stroke="none" />
      <circle cx="1902" cy="615" r="3.500" fill="#3f454a" stroke="none" /><path d="M1900 615H1904" stroke="#6c7174" />
    </svg>
  </div>
);

const Balloon = () => (
  <div className="absolute left-[1509px] top-[22px] h-[117px] w-[248px]">
    <svg width="248" height="117" viewBox="1509 22 248 117" className="absolute left-0 top-0">
      <defs><linearGradient id="bal" x1="0" y1="0" x2="0" y2="1"><stop offset="0" stopColor="#dedede" /><stop offset="1" stopColor="#bdbdbd" /></linearGradient></defs>
      <path d="M1514 33H1720L1731 22L1742 33H1752Q1756.500 33 1756.500 38V133Q1756.500 138 1752 138H1514Q1509.500 138 1509.500 133V38Q1509.500 33 1514 33Z" fill="url(#bal)" stroke="#8c8c8c" />
      <path d="M1528 43a7 7 0 0 1 4 12.500V59H1524V55.500A7 7 0 0 1 1528 43Z" fill="#e9cf80" stroke="#555" /><ellipse cx="1525.500" cy="48" rx="2" ry="3" fill="#fff3c4" /><path d="M1525 60H1531V64H1529V66H1527V64H1525Z" fill="#667" />
      <circle cx="1743.500" cy="43.500" r="5.500" fill="#666" /><path d="M1741.500 41.500l4 4m0-4l-4 4" stroke="#eee" strokeWidth="1.200" /><path d="M1733 120H1745L1739 128.500Z" fill="#4a4a4a" />
    </svg>
    <div className="relative flex flex-col pl-[37px] pt-[21px] text-[12px] leading-[15px] text-[#111]">
      <Fit w={171} className="font-bold">Combine 3D surfaces to create</Fit>
      <Fit w={91} className="font-bold">complex objects</Fit>
      <Fit w={180} className="mt-[5px]">Many 3D commands now support</Fit>
      <Fit w={130}>both solids and surfaces.</Fit>
      <Fit w={134} className="mt-[5px] text-[#0000e0] [&>span]:underline">Don't show me this again</Fit>
    </div>
  </div>
);

const Viewport = () => (
  <div className="flex min-h-0 flex-1">
    <div className="relative w-[1912px] shrink-0 bg-[#212830]">
      <Model />
      <ViewCube />
      <NavBar />
      <Fit w={160} className="absolute left-[3px] top-[6px] text-[12px] leading-[16px] text-[#e6e6e6]">[−][Custom View][Conceptual]</Fit>
      <svg width="60" height="16" viewBox="1850 180 60 16" fill="none" className="absolute left-[1850px] top-[7px]">
        <path d="M1851 190H1861" stroke="#eee" strokeWidth="3" /><path d="M1872 185.500h6v6h-6z" stroke="#eee" strokeWidth="2" /><path d="M1874 183H1880V189" stroke="#eee" strokeWidth="1.300" /><path d="M1892 184.500L1899 192M1899 184.500L1892 192" stroke="#eee" strokeWidth="2.200" />
      </svg>
      <div className="absolute left-[756px] top-[263px] h-[23px] w-[92px] border border-black bg-[#999] pl-[4px] text-[12px] leading-[18px] text-[#111]"><Fit w={75}>Select objects:</Fit></div>
      <div className="absolute left-[1805px] top-[193px] flex h-[18px] w-[48px] items-center rounded-[4px] border border-[#6e7080] bg-[#9da0ae] pl-[4px] font-['Liberation_Sans'] text-[11px] text-[#41444d]">
        <Fit w={24} className="-mt-px">WCS</Fit>
        <svg width="9" height="6" viewBox="0 0 9 6" className="ml-[6px]"><path d="M1 1H8L4.500 5Z" fill="none" stroke="#c4c6d0" /></svg>
      </div>
      <div className="absolute left-[384px] top-[773px] flex w-[1152px] flex-col items-start font-['DejaVu_Sans_Mono'] text-[11.500px]">
        <div className="ml-[60px] h-[15px] rounded-[2px] bg-[#565656] pl-[2px] pr-px leading-[17px] text-[#b4b4b4]"><Fit w={526}>Command: _subtract Select solids, surfaces, and regions to subtract from ..</Fit></div>
        <div className="ml-[60px] mt-[5px] h-[15px] rounded-[2px] bg-[#5c5f5e] pl-[2px] pr-[2px] leading-[17px] text-[#f0f0f0]"><Fit w={161}>Select objects: 1 found</Fit></div>
        <div className="mt-[3px] flex h-[26px] w-[1152px] items-center border border-[#808080] bg-white leading-[24px] text-black">
          <svg width="53" height="24" viewBox="385 985 53 24" fill="none" className="shrink-0 bg-gradient-to-b from-[#6f6f6f] to-[#3f3f3f]">
            <path d="M389.500 988V1006M392.500 988V1006" stroke="#ccc" strokeWidth="1.500" strokeDasharray="1.500 1.500" /><path d="M400 993L408 1001M408 993L400 1001" stroke="#eee" strokeWidth="2" />
            <path d="M425 996L432 1003" stroke="#eee" strokeWidth="2.600" /><path d="M420 994Q421 998 425 997Q428 995 426 992L423.500 990.500" stroke="#eee" strokeWidth="2" />
          </svg>
          <svg width="36" height="24" viewBox="438 985 36 24" className="shrink-0"><path d="M450 991A6 6 0 1 0 450 1003Q445 997 450 991Z" fill="#6f9de8" /><path d="M451 992A5 5 0 1 0 451 1002Q447 997 451 992Z" fill="#203a78" /><path d="M461 995H467L464 999Z" fill="#888" /></svg>
          <Fit w={56} className="font-bold">SUBTRACT</Fit>
          <Fit w={105} className="ml-[5px]">Select objects:</Fit>
          <div className="ml-[9px] mt-px h-[15px] w-px bg-black" />
          <div className="flex-1" />
          <svg width="8" height="4" viewBox="0 0 8 4" className="mr-[3px]"><path d="M0 4H8L4 0Z" fill="#222" /></svg>
        </div>
      </div>
    </div>
    <div className="w-[6px] bg-[#b7cfea]" />
    <div className="w-[2px] bg-[#18a8d8]" />
  </div>
);

/* -------------------------------------------------------------- status bar */
const Seg = ({ className, children }: { className: string; children: React.ReactNode }) => (
  <div className={"flex h-[26px] shrink-0 items-center justify-center border border-[#7c7c7c] bg-[#515151] " + className}>{children}</div>
);
const StatusBar = () => (
  <div className="relative flex h-[29px] shrink-0 border-t border-[#6a6a6a] bg-[#373737] text-[12px] leading-[17px]">
    <svg width="240" height="20" viewBox="0 1011 240 20" className="absolute left-0 top-0">
      <path d="M11 1011Q14 1013 15 1021Q16 1029 21 1029H63Q69 1029 70 1011Z" fill="url(#tb2)" /><path d="M72 1013Q73 1029 79 1029H129Q134 1029 136 1013L139 1011H70Z" fill="#4d4d4d" stroke="#5c5c5c" strokeWidth=".6" />
      <path d="M137 1013Q139 1029 144 1029H194Q199 1029 200 1013L203 1011H136Z" fill="#4d4d4d" stroke="#5c5c5c" strokeWidth=".6" /><path d="M226 1011Q227 1027 216 1027.500H204Q207 1012 212 1011Z" fill="#4d4d4d" stroke="#5c5c5c" strokeWidth=".6" />
      <path d="M215 1015V1023M211 1019H219" stroke="#ccc" strokeWidth="1.500" />
    </svg>
    <Fit w={35} className="relative ml-[23px] font-bold text-white">Model</Fit>
    <Fit w={41} className="relative ml-[23px] text-[#bdbdbd]">Layout1</Fit>
    <Fit w={42} className="relative ml-[24px] text-[#bdbdbd]">Layout2</Fit>
    <div className="flex-1" />
    <Seg className="w-[50px] text-[13px] text-white"><Fit w={41}>MODEL</Fit></Seg>
    <Seg className="w-[65px]">
      <svg width="63" height="24" viewBox="1406 1013 63 24" fill="none">
        <path d="M1411 1017h14v16h-14z" fill="#1b4f8c" opacity=".5" /><path d="M1412.500 1017V1032M1415.500 1017V1032M1418.500 1017V1032M1421.500 1017V1032M1424.500 1017V1032M1411 1019.500H1426M1411 1024.500H1426M1411 1029.500H1426" stroke="#2f90ff" strokeWidth=".9" />
        <path d="M1435 1018.500H1449M1435 1021.500H1449M1435 1024.500H1449M1435 1027.500H1449M1435 1030.500H1449" stroke="#ccc" strokeDasharray="1 2" /><path d="M1458 1023H1465L1461.500 1027.500Z" fill="#fff" />
      </svg>
    </Seg>
    <Seg className="ml-px w-[168px]">
      <svg width="166" height="24" viewBox="1472 1013 166 24" fill="none">
        <path d="M1479.500 1018V1030.500H1491M1479.500 1026H1484V1030" stroke="#ccc" strokeWidth="1.400" /><circle cx="1508" cy="1025" r="6.500" stroke="#2f90ff" strokeWidth="1.600" /><path d="M1508 1025H1516M1508 1025L1514 1018" stroke="#2f90ff" strokeWidth="1.400" />
        <path d="M1524 1023H1531L1527.500 1027.500ZM1563 1023H1570L1566.500 1027.500ZM1627 1023H1634L1630.500 1027.500Z" fill="#fff" /><path d="M1540 1016L1556 1032M1548 1015V1033" stroke="#bbb" strokeWidth="1.300" /><path d="M1556 1029L1541 1019" stroke="#999" strokeWidth=".7" />
        <path d="M1574.500 1012V1038" stroke="#7c7c7c" /><path d="M1592 1018L1580 1031H1594" stroke="#2f90ff" strokeWidth="1.700" /><path d="M1586 1025L1590 1026L1588 1022Z" fill="#2f90ff" />
        <path d="M1606 1020H1618V1032H1606Z" stroke="#2f90ff" strokeWidth="1.500" /><path d="M1604.500 1017.500h4v4h-4z" fill="#0a3" stroke="#030" />
      </svg>
    </Seg>
    <Seg className="ml-px w-[108px] px-0">
      <svg width="77" height="24" viewBox="1641 1013 77 24" fill="none">
        <path d="M1651 1017H1653L1654 1024L1660 1032H1656L1652 1027L1648 1032H1644L1650 1024Z" fill="#3b9bff" stroke="#2f90ff" /><circle cx="1656.500" cy="1019.500" r="2.500" stroke="#3b9bff" strokeWidth="1.200" />
        <path d="M1675 1017H1677L1678 1024L1684 1032H1680L1676 1027L1672 1032H1668L1674 1024Z" fill="#c4c4c4" stroke="#c4c4c4" strokeWidth=".7" /><path d="M1681 1016L1678 1021H1684L1680 1025" stroke="#c4c4c4" />
        <path d="M1699.500 1017H1701.500L1702.500 1024L1708.500 1032H1704.500L1700.500 1027L1696.500 1032H1692.500L1698.500 1024Z" fill="#c4c4c4" stroke="#c4c4c4" strokeWidth=".7" />
      </svg>
      <Fit w={13} className="text-[12px] text-white">1:1</Fit>
      <div className="ml-[5px] mr-[5px]"><Down w={7} h={4} /></div>
    </Seg>
    <Seg className="w-[41px]">
      <svg width="39" height="24" viewBox="0 0 39 24" fill="none"><circle cx="12" cy="12" r="4" stroke="#ccc" strokeWidth="3" /><circle cx="12" cy="12" r="6" stroke="#ccc" strokeWidth="2" strokeDasharray="2.400 2.300" /><path d="M28 10H35L31.500 14.500Z" fill="#fff" /></svg>
    </Seg>
    <Seg className="w-[25px]"><svg width="16" height="16" viewBox="0 0 16 16"><path d="M8 1V15M1 8H15" stroke="#ccc" strokeWidth="1.800" /></svg></Seg>
    <Seg className="ml-px w-[26px]"><svg width="18" height="18" viewBox="0 0 18 18" fill="none" stroke="#ccc" strokeWidth="1.200"><path d="M2 2h6v6H2zM8.500 10L12 16H5Z" /><circle cx="13.500" cy="8" r="3" /></svg></Seg>
    <Seg className="ml-px w-[26px]"><svg width="20" height="20" viewBox="0 0 20 20" fill="none"><circle cx="10" cy="10" r="8" fill="#0a64b8" stroke="#1f8cf0" strokeWidth="1.500" /><path d="M9 12L14 8" stroke="#0a3a70" strokeWidth="1.500" /></svg></Seg>
    <Seg className="ml-px w-[51px]">
      <svg width="49" height="24" viewBox="1870 1013 49 24" fill="none"><path d="M1875 1019.500h14v10h-14z" stroke="#ccc" strokeWidth="1.300" /><path d="M1877 1027.500V1024L1881 1027.500ZM1887 1021.500V1025L1883 1021.500Z" fill="#ddd" /><path d="M1899 1019.500H1914M1899 1024.500H1914M1899 1029.500H1914" stroke="#ccc" strokeWidth="1.800" /></svg>
    </Seg>
  </div>
);

/* ----------------------------------------------------------------- taskbar */
const Taskbar = () => (
  <div className="flex h-[40px] shrink-0 items-center bg-[#010409] text-[12px] text-white">
    <Cell className="h-[40px] w-[48px]"><svg width="16" height="16" viewBox="0 0 16 16"><path d="M0 2.200L7 1.200V7.600H0ZM7.800 1.100L16 0V7.600H7.800ZM0 8.400H7V14.800L0 13.800ZM7.800 8.400H16V16L7.800 14.900Z" fill="#fff" /></svg></Cell>
    <div className="flex h-[40px] w-[344px] items-center bg-[#313131] pl-[9px] text-[15px] text-[#9a9a9a]">
      <svg width="22" height="22" viewBox="0 0 22 22"><circle cx="11" cy="11" r="9" fill="none" stroke="#fff" strokeWidth="2.600" /></svg>
      <Fit w={127} className="ml-[6px] leading-[38px]">Type here to search</Fit>
      <div className="flex-1" />
      <svg width="12" height="18" viewBox="0 0 12 18" fill="none" stroke="#999" className="mr-[15px]"><path d="M3.500 1.500h5v9h-5zM1 8V13H11V8M6 13V17M3 17H9" /></svg>
    </div>
    <Cell className="w-[48px]"><svg width="20" height="16" viewBox="0 0 20 16" fill="none" stroke="#fff" strokeWidth="1.200"><path d="M4.500 1.500h11v13h-11zM3 3H.8V13H3M17 3H19.200V13H17" /></svg></Cell>
    <Cell className="w-[54px]"><svg width="22" height="20" viewBox="0 0 22 20"><path d="M0 1H8L10 3H22V19H0Z" fill="#e9b93c" /><path d="M1 4H22V19H0V6Z" fill="#fbdf8c" /><path d="M4 19V11H18V19H14V15H8V19Z" fill="#3aa0dc" /></svg></Cell>
    <div className="ml-[2px] flex h-[40px] w-[152px] items-center border-b-2 border-[#76b9ed] pl-[7px] pt-[2px]">
      <svg width="22" height="22" viewBox="0 0 22 22"><circle cx="11" cy="11" r="10.500" fill="#e33b2e" /><path d="M11 11L20.500 6.500A10.500 10.500 0 0 1 11 21.500Z" fill="#fcd13f" /><path d="M11 11L10.500 21.500A10.500 10.500 0 0 1 1.800 6Z" fill="#2ba24c" /><circle cx="11" cy="11" r="5" fill="#fff" /><circle cx="11" cy="11" r="3.900" fill="#4486f0" /></svg>
      <Fit w={108} className="ml-[5px]">UCS (Command) | ...</Fit>
    </div>
    <Cell className="w-[57px]"><svg width="24" height="24" viewBox="0 0 24 24"><circle cx="12" cy="12" r="10.500" fill="#e8641b" /><circle cx="13" cy="8.500" r="7.500" fill="#2a7fc4" /><path d="M13 1Q9 3 12 6Q15 5 16 2Z" fill="#7cc4ec" /><path d="M2 5Q4 8 8 7.500Q11 9 8 11Q9 15 14 15Q18 15 19 11Q22 8 20 4Q25 14 19 20Q10 25 4 19Q0 14 2 5Z" fill="#ee7a1c" /><path d="M20 5Q25 13 18 20Q22 12 20 5Z" fill="#ffd43a" /><path d="M3 15Q7 22 15 21Q9 24 4 19Z" fill="#c8321c" /></svg></Cell>
    <Cell className="w-[42px]"><svg width="24" height="22" viewBox="0 0 24 22"><path d="M0 13L8 9L14 3L10 16L6 17Z" fill="#3b83b8" /><path d="M8 10L15 0L11 17L8 20Z" fill="#7d2b1c" /><path d="M15 0Q19 9 24 18Q19 13 13 21Q11 18 9 18Q12 14 15 0Z" fill="#e8731c" /></svg></Cell>
    <div className="ml-[4px] flex h-[40px] w-[160px] items-center border-b-2 border-[#76b9ed] bg-[#33383d] pl-[10px] pt-[2px]">
      <svg width="24" height="24" viewBox="0 0 24 24"><path d="M0 0H24V24H0Z" fill="#f7e4e0" /><path d="M4 21L10 3H14L20 21H16L14.500 16H9L7.500 21ZM10 13H13.500L12 8Z" fill="#c02228" fillRule="evenodd" /></svg>
      <Fit w={112} className="ml-[4px]">Autodesk AutoCAD...</Fit>
    </div>
    <Cell className="w-[49px]"><svg width="24" height="24" viewBox="0 0 24 24"><circle cx="11" cy="12" r="10.500" fill="#5bb8e8" /><path d="M1 9Q4 8 8 9Q17 13 19 20Q18 22 14 22Q10 12 1 9Z" fill="#f1f7fb" /><path d="M3 5Q6 1 12 2L14 5Q8 3 3 5Z" fill="#d8eefa" /><path d="M16 11L24 13L22 21L14 20Z" fill="#0d5f9e" /></svg></Cell>
    <Cell className="w-[49px]"><svg width="24" height="24" viewBox="0 0 24 24"><path d="M12 0L18 6L12 12L6 6Z" fill="#f07070" /><path d="M18 6L24 12L18 18L12 12Z" fill="#8fd05a" /><path d="M6 6L12 12L6 18L0 12Z" fill="#7fb4f5" /><path d="M12 12L18 18L12 24L6 18Z" fill="#f9dd6e" /><path d="M9 4L13 9V19M13 10L17 13" stroke="#111" strokeWidth="1.800" /><circle cx="13" cy="9" r="2" /><circle cx="13" cy="18" r="2" /><circle cx="17" cy="13" r="2" /></svg></Cell>
    <Cell className="w-[49px]">
      <div className="flex h-[23px] w-[22px] flex-col bg-white">
        <div className="h-[7px] bg-[#2f66c4] text-center font-['Liberation_Sans'] text-[8px] font-bold leading-[7px] text-white">Tek</div>
        <svg width="22" height="16" viewBox="0 0 22 16" fill="none"><path d="M4 4h14v9H4z" fill="#555" stroke="#111" /><path d="M6 10H8L9 7H13L14 10H16" stroke="#f5e020" strokeWidth="1.500" /><path d="M6 2H18M4 15H16" stroke="#111" /></svg>
      </div>
    </Cell>
    <div className="flex-1" />
    <svg width="70" height="40" viewBox="1735 1040 70 40" fill="none" stroke="#fff" strokeWidth="1.200">
      <path d="M1738 1062.500L1743 1057.500L1748 1062.500" strokeWidth="1.500" /><path d="M1763 1055.500H1774.500V1064.500H1761.500V1060M1768 1064.500V1067M1764 1067H1772M1759.500 1054.500h4v4h-4z" />
      <path d="M1783.500 1058.500H1786L1789.500 1055V1066L1786 1062.500H1783.500ZM1792 1058Q1793.500 1060.500 1792 1063M1794.500 1056.500Q1797 1060.500 1794.500 1064.500M1797 1055Q1800 1060.500 1797 1066" />
    </svg>
    <div className="flex w-[58px] flex-col items-center text-[12px] leading-[18px]"><Fit w={48}>12:01 PM</Fit><Fit w={52}>8/11/2017</Fit></div>
    <svg width="57" height="40" viewBox="1863 1040 57 40" fill="none"><path d="M1879.500 1052.500H1894.500V1065H1889.500L1887 1068L1884.500 1065H1879.500Z" stroke="#fff" strokeWidth="1.200" /><path d="M1915.500 1040V1080" stroke="#555" /></svg>
  </div>
);

export default function App() {
  return (
    <div className="relative flex h-[1080px] w-[1920px] flex-col overflow-hidden bg-[#373737] font-['Open_Sans',sans-serif]">
      <Defs />
      <TitleBar />
      <RibbonTabs />
      <Ribbon />
      <FileTabs />
      <Viewport />
      <StatusBar />
      <Taskbar />
      <AppButton />
      <Balloon />
    </div>
  );
}
